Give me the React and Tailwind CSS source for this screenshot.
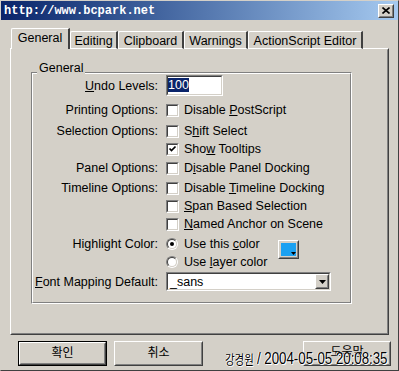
import React from "react";

const F = "font-['Liberation_Sans',Arial,'Noto_Sans_CJK_KR',sans-serif]";

function Check({ checked }) {
  return (
    <span className="block w-[13px] h-[13px] shrink-0 border border-t-[#808080] border-l-[#808080] border-r-white border-b-white">
      <span className="block w-full h-full border border-t-[#404040] border-l-[#404040] border-r-[#d4d0c8] border-b-[#d4d0c8] bg-white">
        {checked && (
          <svg width="9" height="9" viewBox="0 0 9 9" className="block">
            <path d="M1.5 3.5 L3.5 5.5 L7.5 1.5" stroke="#000" strokeWidth="1.7" fill="none" />
          </svg>
        )}
      </span>
    </span>
  );
}

function Radio({ checked }) {
  return (
    <span className="block w-[12px] h-[12px] shrink-0 rounded-full border border-t-[#808080] border-l-[#808080] border-r-white border-b-white">
      <span className="flex items-center justify-center w-full h-full rounded-full border border-t-[#404040] border-l-[#404040] border-r-[#d4d0c8] border-b-[#d4d0c8] bg-white">
        {checked && <span className="block w-[4px] h-[4px] rounded-full bg-black" />}
      </span>
    </span>
  );
}

function Label({ children }) {
  return <span className="w-[125px] text-right whitespace-nowrap shrink-0">{children}</span>;
}

function CheckRow({ label, checked, children, className = "" }) {
  return (
    <div className={`flex items-center h-[18px] ${className}`}>
      <Label>{label}</Label>
      <span className="ml-[8px] flex items-center">
        <Check checked={checked} />
        <span className="ml-[5px] whitespace-nowrap">{children}</span>
      </span>
    </div>
  );
}

function Raised({ children, className = "", inner = "" }) {
  return (
    <div className={`border border-t-white border-l-white border-r-[#404040] border-b-[#404040] ${className}`}>
      <div className={`w-full h-full border border-t-[#d4d0c8] border-l-[#d4d0c8] border-r-[#808080] border-b-[#808080] ${inner}`}>
        {children}
      </div>
    </div>
  );
}

export default function App() {
  return (
    <div className={`w-[399px] h-[371px] relative overflow-hidden bg-[#d4d0c8] border border-t-[#d4d0c8] border-l-[#d4d0c8] border-r-[#404040] border-b-[#404040] text-[12.5px] leading-[14px] text-black ${F}`}>
      {/* title bar */}
      <div className="h-[19px] flex items-center justify-between pl-[3px] pr-[4px] bg-linear-to-r from-[#0a246a] to-[#a6caf0]">
        <span className="font-['Liberation_Mono',monospace] font-bold text-[12px] text-white">http://www.bcpark.net</span>
        <Raised className="w-[16px] h-[14px] bg-[#d4d0c8]" inner="flex items-center justify-center">
          <svg width="8" height="7" viewBox="0 0 8 7" className="block">
            <path d="M0.5 0.5 L7.5 6.5 M7.5 0.5 L0.5 6.5" stroke="#000" strokeWidth="1.6" />
          </svg>
        </Raised>
      </div>

      {/* tabs */}
      <div className="mt-[8px] pl-[10px] flex items-end h-[21px] relative z-10">
        <div className="w-[59px] h-[21px] flex items-start justify-center pt-[2px] bg-[#d4d0c8] border-t border-l border-white border-r-2 border-r-[#404040] rounded-tl-[2px]">
          General
        </div>
        {[
          ["Editing", "w-[48px]"],
          ["Clipboard", "w-[66px]"],
          ["Warnings", "w-[64px]"],
          ["ActionScript Editor", "w-[115px]"],
        ].map(([t, w]) => (
          <div
            key={t}
            className={`${w} h-[18px] flex items-start justify-center pt-[2px] border-t border-l border-white border-r-2 border-r-[#404040] border-b border-b-white rounded-tl-[2px] whitespace-nowrap`}
          >
            {t}
          </div>
        ))}
      </div>

      {/* panel */}
      <div className="ml-[9px] w-[379px] h-[287px] -mt-[1px] border border-t-white border-l-white border-r-[#404040] border-b-[#404040]">
        <div className="w-full h-full border border-t-[#d4d0c8] border-l-[#d4d0c8] border-r-[#808080] border-b-[#808080] pt-[22px] pl-[19px]">
          {/* group box */}
          <div className="relative w-[321px] h-[232px] border border-t-[#808080] border-l-[#808080] border-r-white border-b-white">
            <span className="absolute left-[5px] -top-[12px] px-[2px] bg-[#d4d0c8]">General</span>
            <div className="w-full h-full border border-t-white border-l-white border-r-[#808080] border-b-[#808080] pt-[1px]">
              {/* Undo */}
              <div className="flex items-center h-[21px]">
                <Label>
                  <span className="underline">U</span>ndo Levels:
                </Label>
                <div className="ml-[8px] w-[57px] h-[21px] border border-t-[#808080] border-l-[#808080] border-r-white border-b-white">
                  <div className="w-full h-full border border-t-[#404040] border-l-[#404040] border-r-[#d4d0c8] border-b-[#d4d0c8] bg-white pt-[1px]">
                    <span className="inline-block bg-[#0a246a] text-white h-[14px]">100</span>
                  </div>
                </div>
              </div>

              <CheckRow className="mt-[5px]" label="Printing Options:">
                Disable <span className="underline">P</span>ostScript
              </CheckRow>
              <CheckRow className="mt-[3px]" label="Selection Options:">
                S<span className="underline">h</span>ift Select
              </CheckRow>
              <CheckRow label="" checked>
                Sho<span className="underline">w</span> Tooltips
              </CheckRow>
              <CheckRow className="mt-[1px]" label="Panel Options:">
                D<span className="underline">i</span>sable Panel Docking
              </CheckRow>
              <CheckRow className="mt-[2px]" label="Timeline Options:">
                Disable <span className="underline">T</span>imeline Docking
              </CheckRow>
              <CheckRow label="">
                <span className="underline">S</span>pan Based Selection
              </CheckRow>
              <CheckRow label="">
                <span className="underline">N</span>amed Anchor on Scene
              </CheckRow>

              {/* Highlight color */}
              <div className="mt-[2px] flex items-start">
                <div className="h-[18px] flex items-center">
                  <Label>Highlight Color:</Label>
                </div>
                <div className="ml-[8px] w-[112px] flex flex-col">
                  <div className="h-[18px] flex items-center">
                    <Radio checked />
                    <span className="ml-[6px] whitespace-nowrap">
                      Use this <span className="underline">c</span>olor
                    </span>
                  </div>
                  <div className="h-[18px] flex items-center">
                    <Radio />
                    <span className="ml-[6px] whitespace-nowrap">
                      Use <span className="underline">l</span>ayer color
                    </span>
                  </div>
                </div>
                <Raised className="mt-[5px] w-[21px] h-[19px] bg-[#d4d0c8]" inner="p-[1px]">
                  <div className="relative w-full h-full bg-[#1ba1f2]">
                    <svg width="5" height="3" viewBox="0 0 5 3" className="absolute right-[0px] bottom-[1px]">
                      <path d="M0 0 H5 L2.5 3 Z" fill="#000" />
                    </svg>
                  </div>
                </Raised>
              </div>

              {/* Font mapping */}
              <div className="mt-[1px] flex items-center h-[19px]">
                <Label>
                  <span className="underline">F</span>ont Mapping Default:
                </Label>
                <div className="ml-[8px] w-[165px] h-[19px] border border-t-[#808080] border-l-[#808080] border-r-white border-b-white">
                  <div className="w-full h-full flex items-center border border-t-[#404040] border-l-[#404040] border-r-[#d4d0c8] border-b-[#d4d0c8] bg-white">
                    <span className="flex-1 pl-[2px]">_sans</span>
                    <Raised className="w-[14px] h-[15px] bg-[#d4d0c8]" inner="flex items-center justify-center">
                      <svg width="7" height="4" viewBox="0 0 7 4" className="block">
                        <path d="M0 0 H7 L3.5 4 Z" fill="#000" />
                      </svg>
                    </Raised>
                  </div>
                </div>
              </div>
            </div>
          </div>
        </div>
      </div>

      {/* buttons */}
      <div className="mt-[6px] flex items-start pl-[17px] font-['Noto_Sans_CJK_KR',sans-serif] text-[12px]">
        <div className="w-[89px] h-[25px] border border-black">
          <Raised className="w-full h-full bg-[#d4d0c8]" inner="flex items-start justify-center pt-[1px]">
            확인
          </Raised>
        </div>
        <Raised className="ml-[7px] w-[89px] h-[25px] bg-[#d4d0c8]" inner="flex items-start justify-center pt-[2px]">
          취소
        </Raised>
        <Raised className="ml-[100px] w-[88px] h-[25px] bg-[#d4d0c8]" inner="flex items-start justify-center pt-[1px]">
          도움말
        </Raised>
      </div>

      {/* watermark */}
      <div className="absolute left-[224px] top-[349px] flex items-baseline whitespace-nowrap text-black [text-shadow:1px_1px_0_#fff,-1px_0_0_#fff]">
        <span className="font-['Noto_Sans_CJK_KR',sans-serif] text-[13px] leading-[17px] origin-left scale-x-[0.8] inline-block w-[32px]">강경원</span>
        <span className="font-['Liberation_Sans',sans-serif] text-[17px] leading-[17px] origin-left scale-x-[0.78] inline-block">
          / 2004-05-05 20:08:35
        </span>
      </div>
    </div>
  );
}
